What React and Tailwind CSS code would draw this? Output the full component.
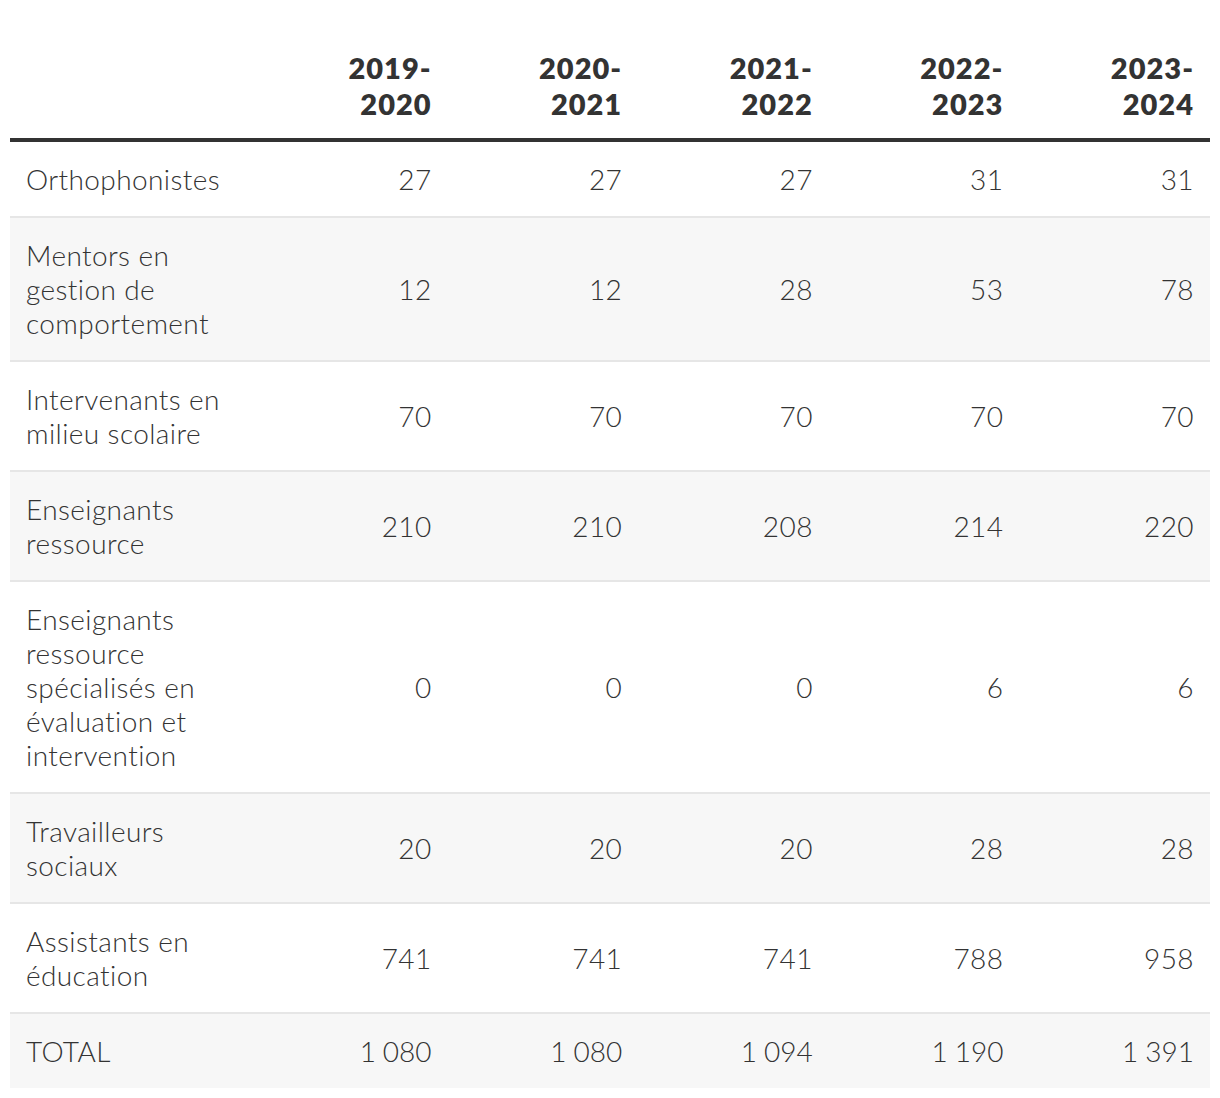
import React from 'react';

const years = [
    ['2019-', '2020'],
    ['2020-', '2021'],
    ['2021-', '2022'],
    ['2022-', '2023'],
    ['2023-', '2024']
];

const rows = [
    { label: 'Orthophonistes', values: ['27', '27', '27', '31', '31'] },
    { label: 'Mentors en gestion de comportement', values: ['12', '12', '28', '53', '78'] },
    { label: 'Intervenants en milieu scolaire', values: ['70', '70', '70', '70', '70'] },
    { label: 'Enseignants ressource', values: ['210', '210', '208', '214', '220'] },
    { label: 'Enseignants ressource spécialisés en évaluation et intervention', values: ['0', '0', '0', '6', '6'] },
    { label: 'Travailleurs sociaux', values: ['20', '20', '20', '28', '28'] },
    { label: 'Assistants en éducation', values: ['741', '741', '741', '788', '958'] },
    { label: 'TOTAL', values: ['1\u202F080', '1\u202F080', '1\u202F094', '1\u202F190', '1\u202F391'] }
];

export default function App() {
    return (
        <div className="bg-white min-h-[1098px] px-[10px] pt-[34px] font-['Lato',sans-serif] text-[#333333]">
            <table className="w-[1200px] table-fixed border-collapse">
                <colgroup>
                    <col className="w-[247px]" />
                    <col />
                    <col />
                    <col />
                    <col />
                    <col />
                </colgroup>
                <thead>
                <tr className="border-b-4 border-[#333333]">
                    <th className="px-4 py-4" />
                    {years.map(y => (
                        <th key={y[0]} className="px-4 py-4 text-right text-[29px] leading-[36px] tracking-[1px] font-extrabold">
                            {y[0]}<br />{y[1]}
                        </th>
                    ))}
                </tr>
                </thead>
                <tbody>
                {rows.map((r, i) => (
                    <tr
                        key={r.label}
                        className={`${i % 2 === 1 || i === rows.length - 1 ? 'bg-[#f7f7f7]' : 'bg-white'} ${
                            i < rows.length - 1 ? 'border-b-2 border-[#e6e6e6]' : ''
                        }`}
                    >
                        <td className="px-4 py-5 text-left text-[28px] leading-[34px] tracking-[0.4px] font-light">{r.label}</td>
                        {r.values.map((v, j) => (
                            <td key={j} className="px-4 py-5 text-right text-[28px] leading-[34px] tracking-[0.4px] font-light">
                                {v}
                            </td>
                        ))}
                    </tr>
                ))}
                </tbody>
            </table>
        </div>
    );
}
